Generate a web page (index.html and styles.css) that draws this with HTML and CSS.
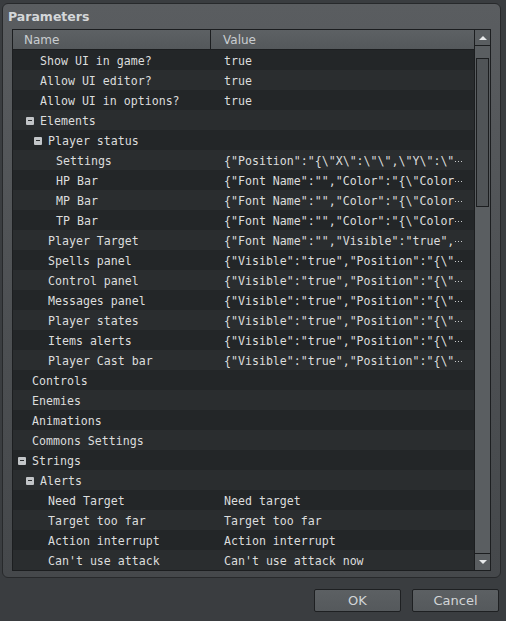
FILE: index.html
```html
<!DOCTYPE html>
<html lang="en">
<head>
    <meta charset="UTF-8">
    <title>Parameters</title>
    <link rel="stylesheet" href="styles.css">
</head>
<body>
    <div class="dialog">
        <div class="group">
            <div class="group-title">Parameters</div>
            <div class="frame">
                <div class="tree">
                    <div class="head">
                        <div class="col-name">Name</div>
                        <div class="col-value">Value</div>
                    </div>
                    <div class="row"><div class="name ind-40">Show UI in game?</div><div class="value">true</div></div>
                    <div class="row"><div class="name ind-40">Allow UI editor?</div><div class="value">true</div></div>
                    <div class="row"><div class="name ind-40">Allow UI in options?</div><div class="value">true</div></div>
                    <div class="row"><div class="name ind-40 open"><span class="toggle"></span>Elements</div><div class="value"></div></div>
                    <div class="row"><div class="name ind-48 open"><span class="toggle"></span>Player status</div><div class="value"></div></div>
                    <div class="row"><div class="name ind-56">Settings</div><div class="value">{"Position":"{\"X\":\"\",\"Y\":\"<span class="more"></span></div></div>
                    <div class="row"><div class="name ind-56">HP Bar</div><div class="value">{"Font Name":"","Color":"{\"Color<span class="more"></span></div></div>
                    <div class="row"><div class="name ind-56">MP Bar</div><div class="value">{"Font Name":"","Color":"{\"Color<span class="more"></span></div></div>
                    <div class="row"><div class="name ind-56">TP Bar</div><div class="value">{"Font Name":"","Color":"{\"Color<span class="more"></span></div></div>
                    <div class="row"><div class="name ind-48">Player Target</div><div class="value">{"Font Name":"","Visible":"true",<span class="more"></span></div></div>
                    <div class="row"><div class="name ind-48">Spells panel</div><div class="value">{"Visible":"true","Position":"{\"<span class="more"></span></div></div>
                    <div class="row"><div class="name ind-48">Control panel</div><div class="value">{"Visible":"true","Position":"{\"<span class="more"></span></div></div>
                    <div class="row"><div class="name ind-48">Messages panel</div><div class="value">{"Visible":"true","Position":"{\"<span class="more"></span></div></div>
                    <div class="row"><div class="name ind-48">Player states</div><div class="value">{"Visible":"true","Position":"{\"<span class="more"></span></div></div>
                    <div class="row"><div class="name ind-48">Items alerts</div><div class="value">{"Visible":"true","Position":"{\"<span class="more"></span></div></div>
                    <div class="row"><div class="name ind-48">Player Cast bar</div><div class="value">{"Visible":"true","Position":"{\"<span class="more"></span></div></div>
                    <div class="row"><div class="name ind-32">Controls</div><div class="value"></div></div>
                    <div class="row"><div class="name ind-32">Enemies</div><div class="value"></div></div>
                    <div class="row"><div class="name ind-32">Animations</div><div class="value"></div></div>
                    <div class="row"><div class="name ind-32">Commons Settings</div><div class="value"></div></div>
                    <div class="row"><div class="name ind-32 open"><span class="toggle"></span>Strings</div><div class="value"></div></div>
                    <div class="row"><div class="name ind-40 open"><span class="toggle"></span>Alerts</div><div class="value"></div></div>
                    <div class="row"><div class="name ind-48">Need Target</div><div class="value">Need target</div></div>
                    <div class="row"><div class="name ind-48">Target too far</div><div class="value">Target too far</div></div>
                    <div class="row"><div class="name ind-48">Action interrupt</div><div class="value">Action interrupt</div></div>
                    <div class="row"><div class="name ind-48">Can't use attack</div><div class="value">Can't use attack now</div></div>
                </div>
                <div class="scrollbar">
                    <div class="arrow up"></div>
                    <div class="groove"><div class="thumb"></div></div>
                    <div class="arrow down"></div>
                </div>
            </div>
        </div>
        <div class="buttons">
            <button type="button">OK</button>
            <button type="button">Cancel</button>
        </div>
    </div>
</body>
</html>
```

FILE: styles.css
```css
body {
    margin: 0;
    background: #3a3d40;
    font-family: 'DejaVu Sans', sans-serif;
    color: #d6d8da;
}

.dialog {
    width: 506px;
    height: 621px;
    padding: 3px 0 0 2px;
    box-sizing: border-box;
    display: flex;
    flex-direction: column;
}

/* group box */
.group {
    width: 499px;
    height: 575px;
    box-sizing: border-box;
    border: 1px solid #27292b;
    border-radius: 6px;
    background: linear-gradient(#5a5d60, #4c4f52 60%, #45484b);
    display: flex;
    flex-direction: column;
}

.group-title {
    height: 25px;
    line-height: 26px;
    padding-left: 5px;
    font-weight: bold;
    font-size: 12.5px;
    color: #d4d7d9;
}

.frame {
    margin-left: 9px;
    width: 479px;
    height: 542px;
    box-sizing: border-box;
    border: 1px solid #1c1e20;
    display: flex;
}

/* tree view */
.tree {
    flex: 1;
    overflow: hidden;
}

.head {
    display: flex;
    height: 20px;
    box-sizing: border-box;
    border-bottom: 1px solid #1c1e20;
    background: linear-gradient(#5d6164, #54585b);
    font-size: 12px;
    line-height: 21px;
    color: #c9cdd0;
}

.col-name {
    width: 198px;
    padding-left: 11px;
    box-sizing: border-box;
    border-right: 1px solid #1c1e20;
}

.col-value {
    padding-left: 12px;
}

.row {
    display: flex;
    height: 20px;
    line-height: 22px;
    font-family: 'DejaVu Sans Mono', monospace;
    font-size: 11.6px;
    color: #dcdddd;
    background: #2a2d2f;
    white-space: pre;
}

.row:nth-child(even) {
    background: #232628;
}

.name {
    width: 199px;
    flex-shrink: 0;
    box-sizing: border-box;
}

.value {
    padding-left: 12px;
    overflow: hidden;
}

/* the three dots after a cut-off value */
.more {
    display: inline-block;
    width: 7px;
    height: 1px;
    margin-left: 1px;
    vertical-align: 3px;
    background: repeating-linear-gradient(90deg, #c9cbcc 0 1px, transparent 1px 3px);
}

.ind-32 { padding-left: 19px; }
.ind-40 { padding-left: 27px; }
.ind-48 { padding-left: 35px; }
.ind-56 { padding-left: 43px; }

.ind-32.open { padding-left: 5px; }
.ind-40.open { padding-left: 13px; }
.ind-48.open { padding-left: 21px; }

.toggle {
    position: relative;
    display: inline-block;
    vertical-align: top;
    width: 8px;
    height: 8px;
    margin: 7px 6px 0 0;
    background: #c2c5c8;
    border-radius: 1px;
}

.toggle::after {
    content: "";
    position: absolute;
    left: 2px;
    top: 3px;
    width: 4px;
    height: 1px;
    background: #2a2d2f;
}

/* scroll bar */
.scrollbar {
    width: 16px;
    box-sizing: border-box;
    border-left: 1px solid #1c1e20;
    background: #5a5e61;
    display: flex;
    flex-direction: column;
}

.arrow {
    height: 16px;
    box-sizing: border-box;
    display: flex;
    align-items: center;
    justify-content: center;
}

.arrow.up {
    border-bottom: 1px solid #1c1e20;
}

.arrow.down {
    border-top: 1px solid #1c1e20;
    height: 17px;
}

.arrow::after {
    content: "";
    border-left: 4px solid transparent;
    border-right: 4px solid transparent;
}

.arrow.up::after {
    border-bottom: 4px solid #e8eaeb;
}

.arrow.down::after {
    border-top: 4px solid #e8eaeb;
}

.groove {
    flex: 1;
    padding: 12px 1px 0 1px;
}

.thumb {
    height: 149px;
    box-sizing: border-box;
    border: 1px solid #1c1e20;
    background: #505457;
}

/* dialog buttons */
.buttons {
    display: flex;
    justify-content: flex-end;
    gap: 11px;
    padding: 11px 7px 0 0;
}

button {
    width: 87px;
    height: 23px;
    border: 1px solid #1e2022;
    border-radius: 2px;
    background: linear-gradient(#5c6063, #55595c);
    color: #d2d5d7;
    font-family: 'DejaVu Sans', sans-serif;
    font-size: 13px;
    padding: 0;
}
```
